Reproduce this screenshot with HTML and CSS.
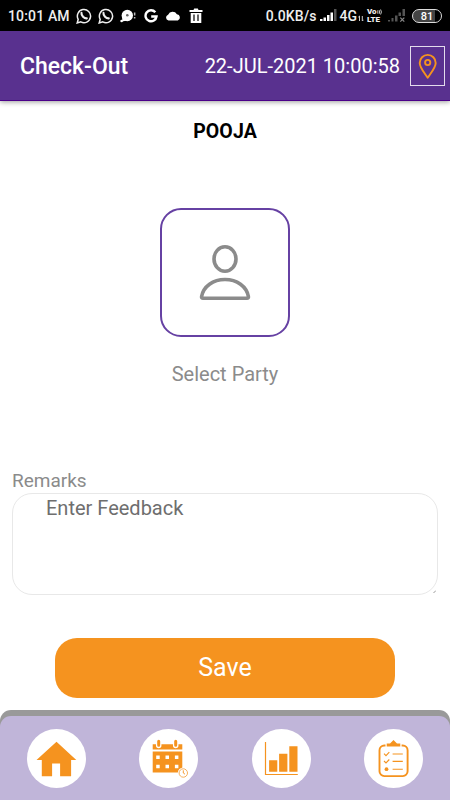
FILE: index.html
```html
<!DOCTYPE html>
<html lang="en">
<head>
  <meta charset="UTF-8">
  <meta name="viewport" content="width=device-width, initial-scale=1.0">
  <title>Check-Out</title>
  <link rel="stylesheet" href="styles.css">
</head>
<body>
  <!-- Status bar -->
  <div class="status-bar">
    <span class="status-time">10:01 AM</span>
    <div class="status-icons">
      <svg width="16" height="16" viewBox="0 0 16 16" fill="none" stroke="#eee">
        <path d="M1.2 15l1-3.7a6.6 6.6 0 1 1 2.6 2.6z" stroke-width="1.5"/>
        <path d="M5.500 4.900c-.5 2.400 2.800 5.800 5.300 5.500" stroke-width="2.100" stroke-linecap="round"/>
      </svg>
      <svg width="16" height="16" viewBox="0 0 16 16" fill="none" stroke="#eee">
        <path d="M1.2 15l1-3.7a6.6 6.6 0 1 1 2.6 2.6z" stroke-width="1.5"/>
        <path d="M5.500 4.900c-.5 2.400 2.800 5.800 5.300 5.500" stroke-width="2.100" stroke-linecap="round"/>
      </svg>
      <svg width="16" height="16" viewBox="0 0 16 16" fill="#fff">
        <circle cx="7.300" cy="7.500" r="5.700"/>
        <path d="M2.500 9L2 13.500l5.500-1z"/>
        <circle cx="7.300" cy="7.300" r="1.300" fill="#666"/>
        <circle cx="1.600" cy="13" r="1.300"/>
        <path d="M13.900 4.500h1.500v3h-1.500zM13.900 9h1.500v1.500h-1.500z" fill="#bbb"/>
      </svg>
      <svg class="google" width="14" height="14" viewBox="0 0 14 14" fill="none" stroke="#fff" stroke-width="2.400">
        <path d="M11.300 3.300A5.500 5.500 0 1 0 12.500 7.500H7.200"/>
      </svg>
      <svg class="cloud" width="16" height="16" viewBox="0 0 16 16" fill="#fff">
        <path d="M3.500 12.500a3 3 0 0 1-.4-5.800 5 5 0 0 1 8.800-.4 3.200 3.200 0 0 1 .9 6.200z"/>
      </svg>
      <svg class="trash" width="14" height="16" viewBox="0 0 14 16">
        <path d="M.5 2h4l.7-1.500h3.600L9.500 2h4v2H.5z" fill="#fff"/>
        <path d="M1.700 5h10.600v10H1.700z" fill="#fff"/>
        <path d="M5 6.500v6.500M9 6.500v6.500" stroke="#000" stroke-width="1.200"/>
      </svg>
    </div>
    <div class="status-right">
      <span class="speed">0.0KB/s</span>
      <svg class="signal" width="17" height="13" viewBox="0 0 17 13">
        <path d="M0 12v-2h2.500v2zM3.500 12V8.500H6V12zM7 12V6h2.500v6zM10.500 12V3.500H13V12z" fill="#fff"/>
        <path d="M14 12V0h2.500v12z" fill="#555"/>
      </svg>
      <span class="network">4G</span>
      <svg class="arrows" width="6" height="7" viewBox="0 0 6 7" fill="none" stroke="#ccc">
        <path d="M1.500 1v5M.3 2.200l1.200-1.200M4.300 1v5M5.500 4.800L4.300 6"/>
      </svg>
      <span class="volte">
        <span class="volte-top">Vo
          <svg width="5" height="6" viewBox="0 0 5 6" fill="none" stroke="#ddd" stroke-width=".9">
            <path d="M.5 1.500q1 1.500 0 3M2 1q1.400 2 0 4M3.600.5q1.600 2.500 0 5"/>
          </svg>
        </span>
        <span>LTE</span>
      </span>
      <svg class="signal-off" width="18" height="14" viewBox="0 0 18 14">
        <path d="M0 12.500V11h2v1.500zM3.500 12.500V9h2v3.500zM7 12.500V6.500h2.500v6zM10.500 7V3.500H13V7zM14.500 7V0H17v7z" fill="#555"/>
        <path d="M12.300 8.700l4 4M16.300 8.700l-4 4" stroke="#888" stroke-width="1.200"/>
      </svg>
      <span class="battery">81</span>
    </div>
  </div>

  <!-- Header -->
  <header class="header">
    <h1>Check-Out</h1>
    <span class="date">22-JUL-2021 10:00:58</span>
    <button class="location-btn" aria-label="Location">
      <svg width="20" height="26" viewBox="0 0 20 26" fill="none" stroke="#f5931f" stroke-width="1.900">
        <path d="M9.700 24.700C7 20.500 1.700 14.700 1.700 9.900a8 8 0 0 1 16 0c0 4.800-5.300 10.600-8 14.800z" stroke-linejoin="round"/>
        <circle cx="9.700" cy="9.500" r="2.600"/>
      </svg>
    </button>
  </header>

  <main class="content">
    <h2 class="user-name">POOJA</h2>
    <button class="party-btn" aria-label="Select Party">
      <svg width="56" height="60" viewBox="0 0 56 60" fill="none" stroke="#8b8b8b" stroke-width="3.600">
        <ellipse cx="28" cy="16" rx="11" ry="12.200"/>
        <path d="M6 55.200h44c1 0 1.600-.7 1.400-1.700C49.600 43.500 40 36.500 28 36.500S6.400 43.500 4.600 53.500c-.2 1 .4 1.700 1.400 1.700z"/>
      </svg>
    </button>
    <p class="party-label">Select Party</p>

    <label class="remarks-label" for="remarks">Remarks</label>
    <div class="remarks-field">
      <textarea id="remarks" placeholder="Enter Feedback"></textarea>
      <svg class="grip" width="3" height="3" viewBox="0 0 3 3" stroke="#999" fill="none">
        <path d="M3 .5L.5 3"/>
      </svg>
    </div>

    <button class="save-btn">Save</button>
  </main>

  <!-- Bottom navigation -->
  <nav class="bottom-nav">
    <div class="nav-items">
      <a class="nav-item" aria-label="Home">
        <svg viewBox="0 0 59 59" fill="#f5931f">
          <path d="M29.500 12.700L49.300 31h-5.200v16.300h-11V34.600h-8v12.700H14.800V31H9.500z"/>
        </svg>
      </a>
      <a class="nav-item" aria-label="Calendar">
        <svg viewBox="0 0 59 59" fill="#f5931f">
          <path d="M13.700 15.200h29.600v5.200H13.700zM13.700 22.500h29.600v21H13.700z"/>
          <path d="M19.700 12.500v4M36.700 12.500v4" stroke="#fff" stroke-width="5.500" stroke-linecap="round"/>
          <path d="M19.700 12.300v4M36.700 12.300v4" stroke="#f5931f" stroke-width="3" stroke-linecap="round"/>
          <path d="M17.200 26.500h3.500V30h-3.500zM26.500 26.500H30V30h-3.500zM35.900 26.500h3.500V30h-3.500zM17.200 35.800h3.500v3.500h-3.500zM26.500 35.800H30v3.500h-3.500zM35.900 35.800h3.500v3.500h-3.500z" fill="#fff"/>
          <circle cx="44.300" cy="44" r="5.500" fill="#fff"/>
          <circle cx="44.300" cy="44" r="4.200" fill="#fff" stroke="#f5a64a" stroke-width=".9"/>
          <path d="M44.300 41.300V44l1.700 1.200" fill="none" stroke="#f5931f" stroke-width=".9"/>
        </svg>
      </a>
      <a class="nav-item" aria-label="Reports">
        <svg viewBox="0 0 59 59" fill="#f5931f">
          <path d="M13.500 13v32.500h32.300" fill="none" stroke="#f5931f" stroke-width="1.200"/>
          <path d="M17.100 31.200h8.200v11.600h-8.200zM27.100 24.800h8.300v18h-8.300zM37.300 17.200h8.200v25.600h-8.200z"/>
        </svg>
      </a>
      <a class="nav-item" aria-label="Tasks">
        <svg viewBox="0 0 59 59" fill="none" stroke="#f5931f">
          <path d="M21.500 16.500h-1.200a4.800 4.800 0 0 0-4.800 4.800v21a4.800 4.800 0 0 0 4.800 4.800h18.500a4.800 4.800 0 0 0 4.800-4.800v-21a4.800 4.800 0 0 0-4.800-4.800h-1.200" stroke-width="1.900"/>
          <path d="M22.700 17.600v-3h3.300l3.500-3.600 3.500 3.600h3.300v3z" fill="#f5931f" stroke="none"/>
          <path d="M20 24.700l2 2 3.300-3.500M20 32l2 2 3.300-3.500" stroke-width="1.100"/>
          <path d="M28.600 25h10.200M28.600 32.400h10.200M28.600 40.200h10.200" stroke-width="1.100"/>
          <circle cx="22.500" cy="40.200" r="1.900" fill="#f5931f" stroke="none"/>
        </svg>
      </a>
    </div>
  </nav>
</body>
</html>
```
FILE: styles.css
```css
* {
  box-sizing: border-box;
}
body {
  margin: 0;
  height: 100vh;
  display: flex;
  flex-direction: column;
  overflow: hidden;
  background-color: #fff;
  font-family: Roboto, "Liberation Sans", sans-serif;
}
button {
  font-family: inherit;
  padding: 0;
  cursor: pointer;
}

/* Status bar */
.status-bar {
  height: 31px;
  flex: none;
  display: flex;
  align-items: center;
  padding: 0 8px;
  background-color: #000;
  color: #eee;
  font-size: 14px;
  font-weight: 500;
}
.status-time {
  width: 68px;
  padding-top: 1px;
  letter-spacing: 0.15px;
  white-space: nowrap;
}
.status-icons {
  display: flex;
  align-items: center;
  gap: 6px;
}
.google {
  margin: 0 1px 0 2px;
}
.trash {
  margin-left: 2px;
}
.status-right {
  display: flex;
  align-items: center;
  margin-left: auto;
}
.speed,
.network {
  padding-top: 1px;
}
.speed {
  letter-spacing: 0.1px;
}
.signal {
  margin: 0 3px;
}
.arrows {
  margin: 5px 3px 0 1px;
}
.volte {
  display: flex;
  flex-direction: column;
  width: 16px;
  padding-top: 1px;
  font-size: 8px;
  line-height: 8px;
  font-weight: 900;
}
.volte-top {
  height: 7px;
  display: flex;
  align-items: center;
}
.signal-off {
  margin: 0 6px 0 5px;
}
.battery {
  width: 30px;
  height: 14px;
  border: 1.5px solid #ddd;
  border-radius: 7px;
  background: linear-gradient(90deg, #444 80%, #000 80%);
  color: #fff;
  font-size: 11px;
  line-height: 13px;
  text-align: center;
}

/* Header */
.header {
  height: 70px;
  flex: none;
  display: flex;
  align-items: center;
  padding: 1px 5px 0 20px;
  background-color: #59318f;
  border-bottom: 1px solid #4b0089;
  box-shadow: 0 1px 5px rgba(0, 0, 0, 0.4);
  color: #fff;
}
.header h1 {
  margin: 0;
  padding-top: 1px;
  font-size: 23px;
  font-weight: 500;
}
.date {
  margin-left: auto;
  font-size: 20px;
}
.location-btn {
  width: 35px;
  height: 40px;
  margin-left: 10px;
  display: flex;
  align-items: center;
  justify-content: center;
  background: none;
  border: 1px solid #e3dcec;
}

/* Content */
.content {
  flex: 1;
  display: flex;
  flex-direction: column;
  align-items: center;
  padding: 19px 12px 0;
}
.user-name {
  margin: 0;
  font-size: 19.5px;
  line-height: 24px;
  font-weight: 700;
  letter-spacing: 0.1px;
}
.party-btn {
  width: 130px;
  height: 129px;
  margin-top: 64px;
  display: flex;
  align-items: center;
  justify-content: center;
  background-color: #fff;
  border: 2px solid #6641a3;
  border-radius: 21px;
}
.party-label {
  margin: 24px 0 0;
  color: #8b8b8b;
  font-size: 20px;
  line-height: 26px;
}
.remarks-label {
  align-self: flex-start;
  margin-top: 82px;
  color: #8b8b8b;
  font-size: 19px;
  line-height: 24px;
}
.remarks-field {
  position: relative;
  width: 100%;
  height: 102px;
}
.remarks-field textarea {
  display: block;
  width: 100%;
  height: 100%;
  padding: 1px 33px;
  border: 1px solid #e8e8e8;
  border-radius: 20px;
  outline: none;
  resize: none;
  font-family: inherit;
  font-size: 20px;
  line-height: 26px;
}
.remarks-field textarea::placeholder {
  color: #6e6e6e;
}
.grip {
  position: absolute;
  right: 2px;
  bottom: 2px;
}
.save-btn {
  width: 340px;
  height: 60px;
  margin-top: 43px;
  padding-bottom: 2px;
  background-color: #f5931f;
  border: none;
  border-radius: 22px;
  color: #fff;
  font-size: 25px;
}

/* Bottom navigation */
.bottom-nav {
  height: 90px;
  flex: none;
  padding-top: 6px;
  background-color: #999;
  border-radius: 11px 11px 0 0;
}
.nav-items {
  height: 84px;
  display: grid;
  grid-template-columns: repeat(4, 1fr);
  justify-items: center;
  padding-top: 13px;
  background-color: #c0b5d9;
  border-radius: 11px 11px 0 0;
}
.nav-item {
  width: 59px;
  height: 59px;
  background-color: #fff;
  border-radius: 50%;
}
.nav-item svg {
  display: block;
}
```
